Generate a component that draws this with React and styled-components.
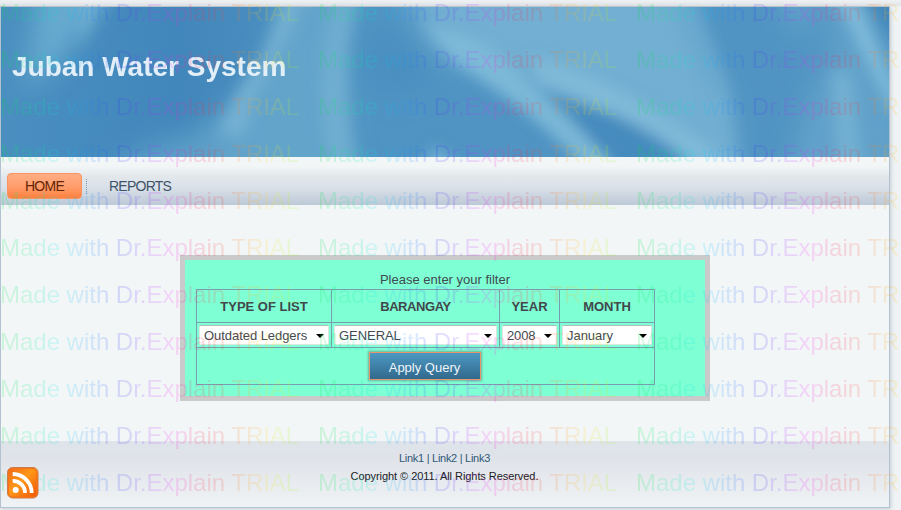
import React from 'react';
import styled, { createGlobalStyle } from 'styled-components';

const GlobalStyle = createGlobalStyle`
  * { box-sizing: border-box; }
  html, body { margin: 0; padding: 0; overflow: hidden; }
  body {
    font-family: 'Liberation Sans', Arial, sans-serif;
    font-size: 13px;
    color: #404a50;
    background: #eff3f5;
  }
`;

const Screen = styled.div`
  position: relative;
  width: 901px;
  height: 510px;
  padding-top: 6px;
  overflow: hidden;
  background: linear-gradient(#eff2f4, #e2e6e9 5px, #eff3f5 7px);
`;

const Sheet = styled.div`
  display: flex;
  flex-direction: column;
  width: 890px;
  height: 502px;
  border: 1px solid #b3c2d0;
  border-top-color: #b7c1c9;
  background: #f2f6f7;
  box-shadow: 1px 1px 4px #c4cbd1;
`;

const Header = styled.header`
  position: relative;
  height: 150px;
  flex: none;
  overflow: hidden;
  background: #5295c3;
`;

const Backdrop = styled.svg`
  position: absolute;
  inset: 0;
  display: block;
`;

const Title = styled.h1`
  position: relative;
  margin: 0;
  padding: 43px 0 0 11px;
  font-size: 28px;
  line-height: 34px;
  font-weight: bold;
  color: #e2eff8;
  white-space: nowrap;
`;

const Nav = styled.nav`
  display: flex;
  flex: none;
  height: 48px;
  padding: 16px 0 0 6px;
  background: linear-gradient(#f2f6f7 0, #f2f6f7 9px, #e2e7eb 20px, #dae1e9 30px, #bdc9d7 48px);
`;

const NavItem = styled.a`
  height: 26px;
  padding: 0 ${(p) => (p.$active ? 0 : 21)}px;
  width: ${(p) => (p.$active ? '75px' : 'auto')};
  border-radius: 4px;
  border: 1px solid ${(p) => (p.$active ? '#fa935f' : 'transparent')};
  background: ${(p) => (p.$active ? 'linear-gradient(#ffad84, #ff9e6e 50%, #ff813f)' : 'none')};
  color: ${(p) => (p.$active ? '#632504' : '#3d5369')};
  font-size: 14px;
  line-height: 24px;
  letter-spacing: -0.75px;
  text-align: center;
`;

const NavDivider = styled.i`
  width: 1px;
  height: 15px;
  margin: 6px 0 0 4px;
  background: repeating-linear-gradient(#7f99b3 0 1px, transparent 1px 2px);
`;

const Main = styled.main`
  flex: none;
  height: 236px;
  padding: 50px 0 0 179px;
`;

const FilterPanel = styled.section`
  width: 530px;
  height: 146px;
  padding: 12px 0 0 11px;
  border: 5px solid #cacaca;
  background: #7fffd4;
`;

const Caption = styled.div`
  height: 17px;
  margin-left: -11px;
  line-height: 16px;
  text-align: center;
`;

const Grid = styled.div`
  display: grid;
  grid-template-columns: 134px 167px 59px 94px;
  grid-template-rows: 32px 24px 36px;
  gap: 1px;
  width: 459px;
  padding: 1px;
  background: #7b9db0;
`;

const Cell = styled.div`
  display: flex;
  align-items: center;
  justify-content: center;
  background: #7fffd4;
  grid-column: ${(p) => (p.$full ? '1 / -1' : 'auto')};
  padding: ${(p) => (p.$full ? '0 2px 1px 0' : 0)};
`;

const Head = styled(Cell)`
  font-weight: bold;
  letter-spacing: ${(p) => p.$tracking || 0}px;
  color: #40484c;
`;

const Select = styled.div`
  display: flex;
  align-items: center;
  justify-content: space-between;
  width: calc(100% - 4px);
  height: 20px;
  padding: 0 4px 0 4px;
  border: 1px solid #dfe5e3;
  border-top-color: #aebdbb;
  background: #fff;
  border-radius: 2px;
  color: #424a50;
  letter-spacing: ${(p) => p.$tracking || 0}px;
  white-space: nowrap;
`;

const Arrow = styled.i`
  flex: none;
  border: 4px solid transparent;
  border-top-color: #000;
  border-bottom: 0;
  margin-top: 1px;
`;

const QueryButton = styled.div`
  width: 112px;
  height: 28px;
  border: 1px solid #e6966c;
  box-shadow: 0 0 2px 1px #6ab39c;
  background: linear-gradient(#4c98c2, #3f81a8 50%, #31698c);
  color: #eff5fa;
  line-height: 30px;
  text-align: center;
`;

const Footer = styled.footer`
  flex: 1;
  padding-top: 8px;
  background: linear-gradient(#dfe4eb 0, #dfe3e9 15px, #eff3f5 100%);
  font-size: 11px;
  line-height: 18px;
  text-align: center;
`;

const FooterLine = styled.div`
  margin-left: -1px;
  letter-spacing: ${(p) => (p.$links ? -0.28 : -0.06)}px;
  color: ${(p) => (p.$links ? '#2f5876' : '#1c2024')};
`;

const FeedLayer = styled.div`
  position: absolute;
  left: 6px;
  top: 466px;
`;

const Feed = styled.svg`
  display: block;
`;

const Watermark = styled.div`
  position: absolute;
  left: 0;
  top: 0;
  display: grid;
  grid-template-columns: repeat(3, 318px);
  grid-auto-rows: 47px;
  opacity: 0.16;
  pointer-events: none;
`;

const Mark = styled.span`
  width: 300px;
  height: 30px;
  font-size: 24px;
  line-height: 26px;
  letter-spacing: -0.02px;
  white-space: nowrap;
  color: transparent;
  background: linear-gradient(90deg, #00e43c, #00ee99 12%, #00e8f4 20%, #1e8cff 30%, #2c32f4 39%, #8430ff 47%, #ff20ff 57%, #ff2055 66%, #ff3d2e 74%, #ff9a20 82%, #ffe020 90%, #8aff30);
  background-clip: text;
`;

function Folds() {
  return (
    <Backdrop width="888" height="150" viewBox="0 0 888 150">
      <defs>
        <filter id="soft" filterUnits="userSpaceOnUse" x="-60" y="-60" width="1010" height="270"><feGaussianBlur stdDeviation="13" /></filter>
        <filter id="fine" filterUnits="userSpaceOnUse" x="-60" y="-60" width="1010" height="270"><feGaussianBlur stdDeviation="7" /></filter>
        <linearGradient id="base" x2="1">
          <stop offset="0" stopColor="#4a8fc0" />
          <stop offset=".2" stopColor="#4287bb" />
          <stop offset=".4" stopColor="#5094c3" />
          <stop offset="1" stopColor="#5194c3" />
        </linearGradient>
      </defs>
      <rect width="888" height="150" fill="url(#base)" />
      <g filter="url(#soft)">
        <path d="M40-30H112L72 40L25 85Q28 35 40-30Z" fill="#68aacf" />
        <path d="M170 190L190 130L230 100L262 60L290-30H350L338 50L352 190Z" fill="#63a4cb" />
        <path d="M75 190Q150 125 200 128L260 190Z" fill="#5c9ec7" />
        <path d="M385-40H672L702 40L728 100L738 190H700L650 125L580 102L505 70L440 50Z" fill="#72afd2" />
        <path d="M780 190L812 80L835 40L810-30H850L900 70V190Z" fill="#62a2ca" />
        <path d="M765-30H805V40Z" fill="#64a5cc" />
        <path d="M365 30L385 15L412 45L440 75L390 90L360 70Z" fill="#4a8fc0" />
      </g>
      <g filter="url(#fine)">
        <path d="M512 74L560 92L610 108L660 128L690 160H612L560 118Z" fill="#4489bc" opacity=".9" />
        <path d="M288-20H308Q282 50 255 90L242 130L218 125Q238 75 260 55Z" fill="#7bb6d6" opacity=".75" />
        <path d="M338-20H360Q335 60 358 170H332Q305 65 338-20Z" fill="#76b3d4" opacity=".7" />
        <path d="M420 15L480 35Q550 85 618 165H590Q530 105 460 58Z" fill="#80bbd9" opacity=".9" />
        <path d="M530 50Q620 70 735 160H700Q610 98 540 76Z" fill="#84bddb" opacity=".8" />
        <path d="M672-20H690L728 80L738 160H718L706 70Z" fill="#7ab6d6" opacity=".35" />
        <path d="M830-20H850L895 85V112Z" fill="#82bedc" opacity=".95" />
        <path d="M830 65H850L862 170H838Z" fill="#7ab7d6" opacity=".7" />
        <path d="M858-20H910V60Z" fill="#4388bb" />
        <path d="M78-20H112L78 40Z" fill="#7ab7d6" opacity=".6" />
        <path d="M428 143Q446 136 460 170H423Z" fill="#70afd2" />
      </g>
    </Backdrop>
  );
}

function FeedIcon() {
  return (
    <Feed width="33" height="33" viewBox="0 0 33 33">
      <defs>
        <linearGradient id="feed" x1="0" y1="0" x2="1" y2="1">
          <stop offset="0" stopColor="#ed6415" />
          <stop offset=".45" stopColor="#ff9818" />
          <stop offset="1" stopColor="#ee5205" />
        </linearGradient>
      </defs>
      <rect x="1.5" y="1.5" width="30.5" height="30.5" rx="5" fill="url(#feed)" stroke="#c77d52" />
      <rect x="2.5" y="2.5" width="28.5" height="28.5" rx="4" fill="none" stroke="#fa7314" />
      <circle cx="9.7" cy="24" r="3" fill="#fff" />
      <path d="M6.7 14.8A12 12 0 0 1 19 27M6.7 8A19 19 0 0 1 25.7 27" fill="none" stroke="#fff" strokeWidth="3.8" />
    </Feed>
  );
}

const filters = [
  { label: 'TYPE OF LIST', value: 'Outdated Ledgers', tracking: -0.05 },
  { label: 'BARANGAY', labelTracking: -0.4, value: 'GENERAL', tracking: -0.05 },
  { label: 'YEAR', value: '2008', tracking: -0.15 },
  { label: 'MONTH', value: 'January', tracking: -0.05 },
];

export default function App() {
  return (
    <Screen>
      <GlobalStyle />
      <Sheet>
        <Header>
          <Folds />
          <Title>Juban Water System</Title>
        </Header>
        <Nav>
          <NavItem $active>HOME</NavItem>
          <NavDivider />
          <NavItem>REPORTS</NavItem>
        </Nav>
        <Main>
          <FilterPanel>
            <Caption>Please enter your filter</Caption>
            <Grid>
              {filters.map((f) => <Head key={f.label} $tracking={f.labelTracking}>{f.label}</Head>)}
              {filters.map((f) => (
                <Cell key={f.label}>
                  <Select $tracking={f.tracking}>{f.value}<Arrow /></Select>
                </Cell>
              ))}
              <Cell $full><QueryButton>Apply Query</QueryButton></Cell>
            </Grid>
          </FilterPanel>
        </Main>
        <Footer>
          <FooterLine $links>Link1 | Link2 | Link3</FooterLine>
          <FooterLine>Copyright © 2011. All Rights Reserved.</FooterLine>
        </Footer>
      </Sheet>
      <Watermark>
        {Array.from({ length: 33 }, (_, i) => <Mark key={i}>Made with Dr.Explain TRIAL</Mark>)}
      </Watermark>
      <FeedLayer><FeedIcon /></FeedLayer>
    </Screen>
  );
}
